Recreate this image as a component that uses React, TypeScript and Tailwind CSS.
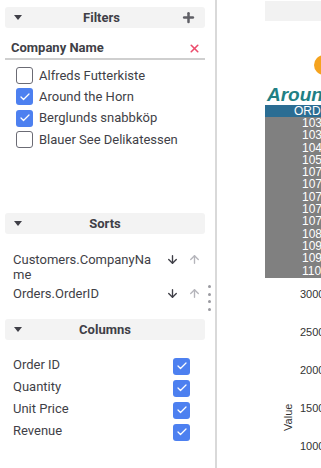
import { Plus, X, ArrowDown, ArrowUp, Check } from 'lucide-react'

const COMPANIES = [
  { name: 'Alfreds Futterkiste', checked: false },
  { name: 'Around the Horn', checked: true },
  { name: 'Berglunds snabbköp', checked: true },
  { name: 'Blauer See Delikatessen', checked: false },
]

const SORTS = ['Customers.CompanyName', 'Orders.OrderID']

const COLUMNS = ['Order ID', 'Quantity', 'Unit Price', 'Revenue']

const ORDER_IDS = [
  '10355', '10383', '10453', '10558', '10707', '10741', '10743',
  '10768', '10793', '10864', '10920', '10953', '11016',
]

const TICKS = ['3000', '2500', '2000', '1500', '1000']

function Box({ checked }: { checked: boolean }) {
  return checked ? (
    <span className="flex h-[17px] w-[17px] items-center justify-center rounded-[3px] bg-[#4d80f0]">
      <Check className="h-[12px] w-[12px] text-white" strokeWidth={2.5} />
    </span>
  ) : (
    <span className="h-[17px] w-[17px] rounded-[3px] border border-[#6b6b74] bg-white" />
  )
}

function PanelHeader({ title, plus = false }: { title: string; plus?: boolean }) {
  return (
    <div className="flex h-[21px] items-center rounded-[3px] bg-[#f3f3f3] px-[9px]">
      <span className="h-0 w-0 border-x-[4px] border-t-[5px] border-x-transparent border-t-[#3f3f47]" />
      <span className="flex-1 text-center text-[13px] font-bold text-[#3f3f47]">{title}</span>
      {plus ? (
        <Plus className="h-[15px] w-[15px] text-[#5f5f66]" strokeWidth={4} />
      ) : (
        <span className="w-[8px]" />
      )}
    </div>
  )
}

export default function App() {
  return (
    <div className="flex h-[468px] w-[321px] overflow-hidden bg-white font-['Roboto',sans-serif] text-[13px] text-[#3f3f47]">
      <aside className="relative w-[215px] shrink-0 pl-[5px] pr-[10px] pt-[7px]">
        <PanelHeader title="Filters" plus />

        <div className="mt-[11px] flex h-[21px] items-center justify-between border-b-2 border-[#cfcfcf] pb-[1px] pl-[6px] pr-[4px]">
          <span className="font-bold">Company Name</span>
          <X className="h-[13px] w-[13px] text-[#ec4c6c]" strokeWidth={3} />
        </div>

        <ul className="mt-[5px] pl-[11px]">
          {COMPANIES.map((c) => (
            <li key={c.name} className="flex h-[21.3px] items-center gap-[6px]">
              <Box checked={c.checked} />
              <span>{c.name}</span>
            </li>
          ))}
        </ul>

        <div className="mt-[63px]">
          <PanelHeader title="Sorts" />
        </div>

        <ul className="mt-[18px] pl-[8px]">
          {SORTS.map((s) => (
            <li key={s} className="flex items-start leading-[15px]">
              <span className="w-[145px] break-all pb-[4px]">{s}</span>
              <span className="ml-[8px] flex items-center gap-[9px] pt-[1px]">
                <ArrowDown className="h-[13px] w-[13px] text-[#3f3f47]" strokeWidth={2.5} />
                <ArrowUp className="h-[13px] w-[13px] text-[#b5b5bb]" strokeWidth={2.5} />
              </span>
            </li>
          ))}
        </ul>

        <div className="absolute left-[208px] top-[285px] flex flex-col gap-[4.5px]">
          {[0, 1, 2, 3].map((i) => (
            <span key={i} className="h-[3px] w-[3px] rounded-full bg-[#9a9aa0]" />
          ))}
        </div>

        <div className="mt-[14px]">
          <PanelHeader title="Columns" />
        </div>

        <ul className="mt-[15px] pl-[8px] pr-[15px]">
          {COLUMNS.map((c) => (
            <li key={c} className="flex h-[22px] items-center justify-between">
              <span className="-mt-[3px]">{c}</span>
              <Box checked />
            </li>
          ))}
        </ul>
      </aside>

      <div className="w-[2px] shrink-0 bg-[#d9d9d9]" />

      <main className="min-w-0 flex-1 overflow-hidden pl-[48px] font-['Liberation_Sans',Arial,sans-serif]">
        <div className="mt-[1px] h-[20px] w-[200px] bg-[#f2f2f2]" />
        <div className="ml-[49px] mt-[34px] h-[20px] w-[20px] rounded-full bg-[#f5a31e]" />
        <h1 className="mt-[10px] whitespace-nowrap pl-[2px] text-[19px] font-bold italic leading-[20px] text-[#217f84]">
          Around the Horn
        </h1>
        <div className="w-[200px]">
          <div className="h-[12px] whitespace-nowrap bg-[#2b6d93] pl-[29px] text-[12px] leading-[12px] text-white">
            ORDER ID
          </div>
          <div className="bg-[#808080] pb-[1px]">
            {ORDER_IDS.map((id) => (
              <div key={id} className="h-[12.3px] pl-[37px] text-[12px] leading-[12.3px] text-white">
                {id}
              </div>
            ))}
          </div>
        </div>
        <div className="mt-[6px] flex">
          <div className="flex w-[35px] items-center justify-start pl-[10px] pt-[76px]">
            <span className="-rotate-90 text-[11px] text-[#333]">Value</span>
          </div>
          <div className="flex flex-col">
            {TICKS.map((t) => (
              <span key={t} className="h-[38px] text-[11px] leading-[20px] text-[#333]">
                {t}
              </span>
            ))}
          </div>
        </div>
      </main>
    </div>
  )
}
